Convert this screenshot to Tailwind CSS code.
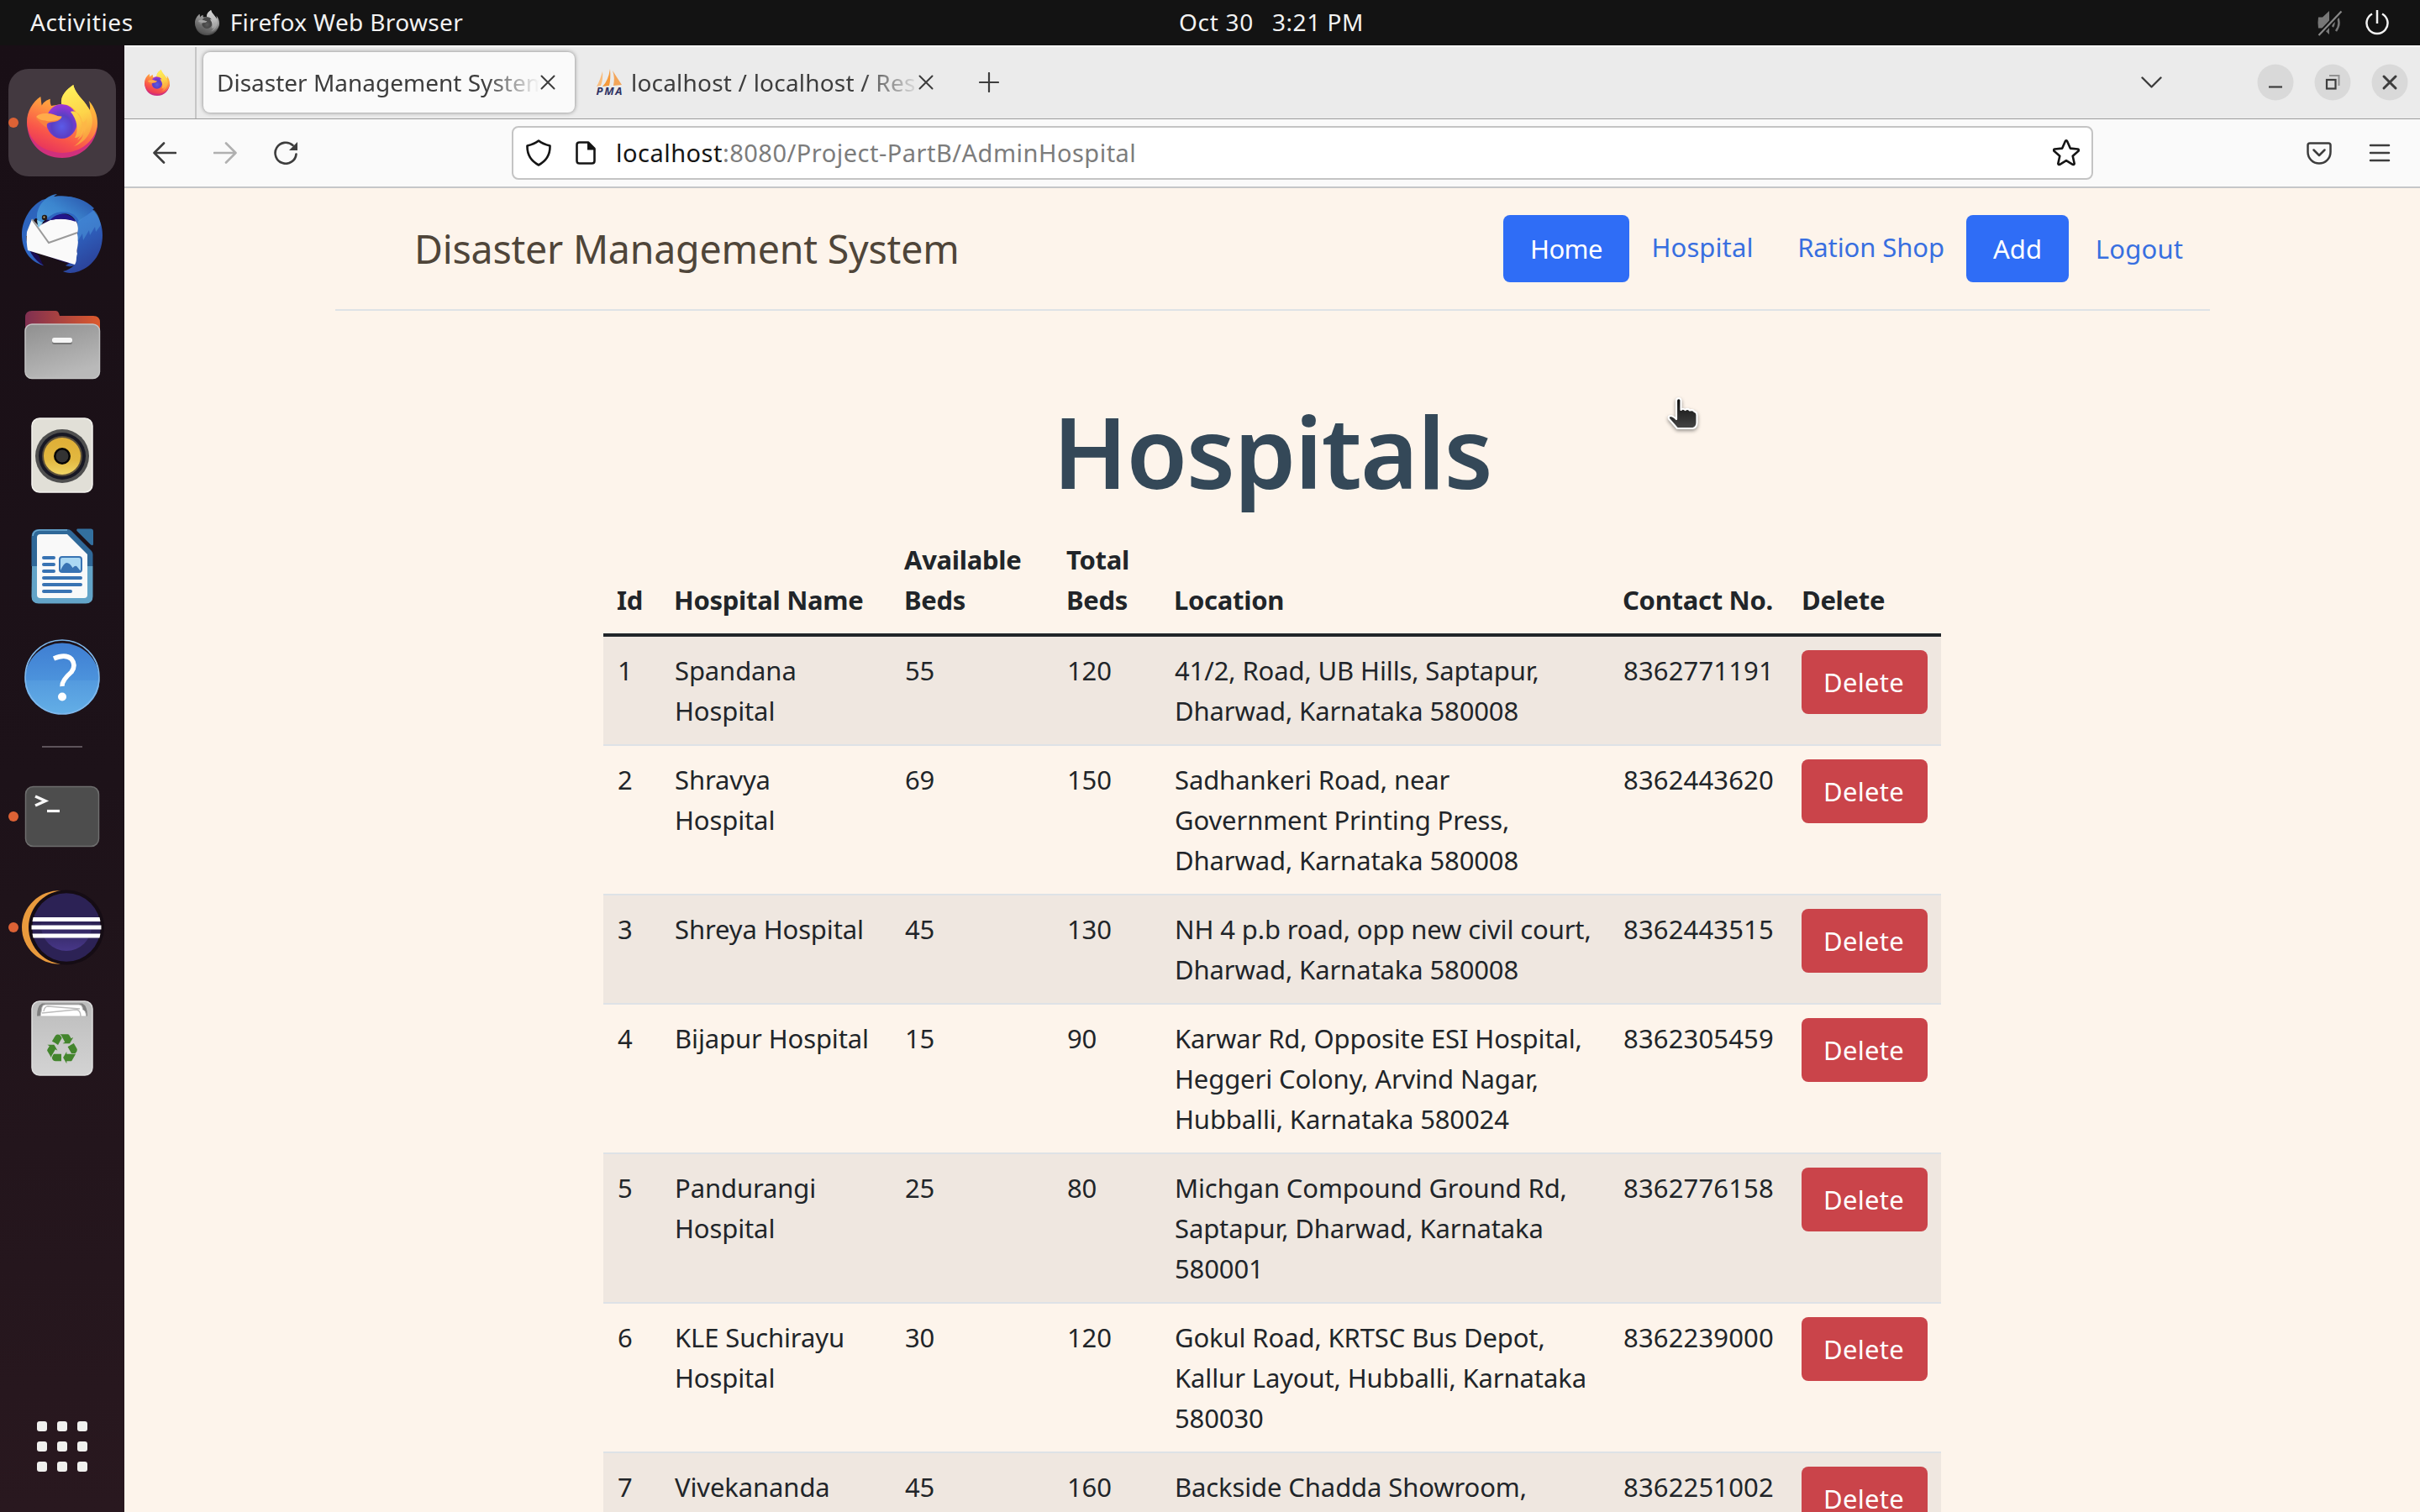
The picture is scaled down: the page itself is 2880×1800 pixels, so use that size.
<!DOCTYPE html>
<html lang="en">
<head>
<meta charset="utf-8">
<title>Disaster Management System</title>
<script src="https://cdn.jsdelivr.net/npm/@tailwindcss/browser@4"></script>
</head>
<body class="flex h-[1800px] w-[2880px] flex-col overflow-hidden bg-[#131313] font-['Noto_Sans',sans-serif]">

<!-- shared gradients and symbols -->
<svg class="absolute size-0" aria-hidden="true">
  <defs>
    <linearGradient id="ffBody" x1="0.75" y1="0.1" x2="0.35" y2="1"><stop offset="0" stop-color="#ffcf3a"/><stop offset="0.4" stop-color="#ff9640"/><stop offset="0.75" stop-color="#f9554a"/><stop offset="1" stop-color="#e8355c"/></linearGradient>
    <linearGradient id="ffFlame" x1="0.4" y1="0" x2="0.6" y2="1"><stop offset="0" stop-color="#fff05a"/><stop offset="0.5" stop-color="#fdd44a"/><stop offset="1" stop-color="#f9953f"/></linearGradient>
    <radialGradient id="ffGlobe" cx="0.5" cy="0.65" r="0.65"><stop offset="0" stop-color="#5b5be8"/><stop offset="0.5" stop-color="#5a3fc4"/><stop offset="1" stop-color="#a035d8"/></radialGradient>
    <symbol id="firefox" viewBox="0 0 84 87">
      <path fill="#d0307c" d="M0 44C0 70 18 87 42 87S84 68 84 46L70 60Z"/>
      <path fill="url(#ffBody)" d="M16.300 14C17 18 17 21 17.700 24.500C20 20 24 18 27.700 16.700C27.500 20 28 23 29 25L41 23C40 12 47 6 55.300 0C57 8 63 14 68 20C71 24 73 27 75 30C75.500 26 75 23 73.700 19C81 27 84 37 84 46C83 66 64 81 42 81C18 80 1 66 0 44C0 32 7 20 16.300 14Z"/>
      <ellipse cx="41.500" cy="43.500" rx="18.500" ry="20.500" fill="url(#ffGlobe)"/>
      <path fill="url(#ffFlame)" d="M41 23C40 12 47 6 55.300 0C57 8 63 14 68 20C76 30 80 40 77 50C74 62 66 70 56 73C64 68 68 60 68 54C64 62 60 63 57 63C62 54 60 42 52 32C55 31 57 32 59 33C55 26 48 23 41 23Z"/>
      <path fill="#fdb647" opacity=".75" d="M59 33C67 42 68 54 60 66C68 61 73 51 71 40C69 45 66 47 65 41C64 37 62 34 59 33Z"/>
      <path fill="#f8803f" d="M11 40C15 35 20 34 27 34C31 34 37 38 41.500 38C40 43 34 44 29 44.500C25 45 23 46 23.500 51C19 48 14 43 11 40Z"/>
      <path fill="#ffab4a" d="M11 38C15 34 20 33.500 27 34.500C32 35.500 37 38 41.500 37.500C40 42 34 42.500 29 43C25 43.500 23 43 22 42.500C18 42.500 14 41 11 38Z"/>
    </symbol>
    <symbol id="close" viewBox="0 0 18 18"><path d="M1.500 1.500l15 15M16.500 1.500l-15 15" fill="none" stroke="currentColor" stroke-width="2" stroke-linecap="round"/></symbol>
    <linearGradient id="folderBack" x1="0" x2="1"><stop offset="0" stop-color="#7f2f51"/><stop offset="1" stop-color="#dd5a2c"/></linearGradient>
    <linearGradient id="folderFront" x1="0" y1="0" x2="0.4" y2="1"><stop offset="0" stop-color="#8f8f8f"/><stop offset="1" stop-color="#b9b9b9"/></linearGradient>
    <linearGradient id="tbBody" x1="0.2" y1="0" x2="0.8" y2="1"><stop offset="0" stop-color="#2c62b8"/><stop offset="0.5" stop-color="#2f68c6"/><stop offset="1" stop-color="#2b3f96"/></linearGradient>
    <linearGradient id="tbHead" x1="0" y1="1" x2="1" y2="0.2"><stop offset="0" stop-color="#4a9adb"/><stop offset="0.5" stop-color="#3c86cf"/><stop offset="1" stop-color="#2a57ad"/></linearGradient>
    <linearGradient id="gold" x1="0" y1="0" x2="0" y2="1"><stop offset="0" stop-color="#dfae36"/><stop offset="0.6" stop-color="#e2b840"/><stop offset="1" stop-color="#f0d566"/></linearGradient>
    <linearGradient id="helpTop" x1="0" y1="0" x2="0" y2="1"><stop offset="0" stop-color="#3f7ed2"/><stop offset="1" stop-color="#4c93dc"/></linearGradient>
    <linearGradient id="helpBottom" x1="0" y1="0" x2="0" y2="1"><stop offset="0" stop-color="#549ade"/><stop offset="1" stop-color="#63aee6"/></linearGradient>
    <linearGradient id="eclipseGlow" x1="0" y1="0" x2="0" y2="1"><stop offset="0.4" stop-color="#2c2255"/><stop offset="1" stop-color="#473788"/></linearGradient>
    <linearGradient id="trash" x1="0" y1="0" x2="0" y2="1"><stop offset="0" stop-color="#bcbcbc"/><stop offset="1" stop-color="#d3d3d3"/></linearGradient>
    <linearGradient id="hand" x1="0" y1="0" x2="0" y2="1"><stop offset="0" stop-color="#0c0c0c"/><stop offset="1" stop-color="#454545"/></linearGradient>
  </defs>
</svg>

<!-- system bar -->
<header class="flex h-[54px] shrink-0 items-center text-[28px] leading-[52px] text-[#f2f2f2]">
  <div class="flex w-[1403px] items-center">
    <span class="-mt-0.5 ml-9 tracking-[0.6px]">Activities</span>
    <svg class="ml-[73px] h-[30px] w-[29px] grayscale brightness-90" viewBox="0 0 84 87"><use href="#firefox"/></svg>
    <span class="-mt-0.5 ml-[13px] tracking-[0.35px]">Firefox Web Browser</span>
  </div>
  <div class="-mt-0.5 flex gap-[22px]"><span class="tracking-[0.71px]">Oct 30</span><span class="tracking-[0.55px]">3:21 PM</span></div>
  <div class="flex flex-1 items-center justify-end gap-[27px] pr-[37px]">
    <svg class="h-[32px] w-[30px]" viewBox="0 0 30 32" fill="none">
      <path fill="#777" d="M1 9.500h5L14 2v28L6 22.500H1Q0 16 1 9.500Z"/>
      <path d="M18 11q3 5 0 10M22 6.500q7 9.500 0 19.500" stroke="#777" stroke-width="2.500"/>
      <path d="M1.500 31L28.500 2.500" stroke="#131313" stroke-width="6"/>
      <path d="M1.500 31L28.500 2.500" stroke="#888" stroke-width="2.200"/>
    </svg>
    <svg class="h-[32px] w-[28px]" viewBox="0 0 28 32" fill="none" stroke="#f2f2f2" stroke-width="2.500"><path d="M8 5.500a12.500 12.500 0 1 0 12 0M14 1v16"/></svg>
  </div>
</header>

<div class="flex min-h-0 flex-1">
  <!-- dock -->
  <nav class="flex w-[148px] shrink-0 flex-col bg-gradient-to-b from-[#190f16] via-[#1d1219] to-[#29181f] pt-[26px] pb-3">
    <svg class="h-[132px] w-[148px]" viewBox="0 0 148 132">
      <rect x="10" y="2" width="128" height="128" rx="24" fill="#433940"/>
      <circle cx="16" cy="66" r="6" fill="#dc6235"/>
      <use href="#firefox" x="32" y="21" width="84" height="87"/>
    </svg>
    <svg class="h-[132px] w-[148px]" viewBox="0 0 148 132">
      <path fill="#1b0c52" d="M31 84L90 105L96 80L92 50L60 46L32 70Z"/>
      <path fill="#1b0c52" d="M32 83Q38 98 52 105L46 92Z"/>
      <path fill="url(#tbBody)" d="M66 22C98 18 122 40 122 68C122 88 112 104 94 111C86 114 78 113 75 111C80 110 85 107 88 104C84 106 80 105 78 104C88 99 90 92 92 86C92 78 90 86 92 66C94 56 92 52 90 51C82 38 70 42 60 50L42 48C34 58 32 66 35 68L31 69C32 84 40 98 52 104C36 100 26 86 26 67C26 50 36 34 50 26Z"/>
      <path fill="#fafafa" d="M38 49L32 64Q31 76 33 86L89 103C92 98 90 96 92 90C90 86 95 78 92 66C94 60 93 55 90 51Q74 47 60 50L46 57Z"/>
      <path fill="none" stroke="#9a9a9a" stroke-width="2" d="M38 49L58 77L92 65"/>
      <path fill="#21168a" d="M60 50C68 40 84 40 90 52Q76 46 60 50Z"/>
      <path fill="url(#tbHead)" d="M68 19C56 20 44 32 44 46L45 58C52 52 58 44 68 41C82 38 92 44 94 52L112 36C100 24 84 20 64 22Z"/>
      <path fill="#4c96d8" d="M92 52L112 38Q118 44 120 56L114 64L113 58L107 68L106 62L99 74L98 66L92 76L93 66Z" opacity=".55"/>
      <path fill="#8fd0ee" d="M44 50L46 59L51 53Z"/>
      <circle cx="53" cy="47" r="3.200" fill="#241c18"/><circle cx="52.500" cy="46.500" r="1" fill="#d9c98a"/>
    </svg>
    <svg class="h-[132px] w-[148px]" viewBox="0 0 148 132">
      <path fill="url(#folderBack)" d="M30 34q0-8 8-8h28q3 0 4 3l1 3h40q8 0 8 8v20H30Z"/>
      <rect x="30" y="42" width="88.500" height="64.500" rx="8" fill="url(#folderFront)" stroke="#c4c4c4" stroke-width="1.500"/>
      <rect x="62" y="60" width="24" height="6" rx="2.500" fill="#777"/>
      <rect x="62" y="58" width="24" height="6" rx="2.500" fill="#f5f5f5"/>
    </svg>
    <svg class="h-[132px] w-[148px]" viewBox="0 0 148 132">
      <rect x="38" y="22" width="72" height="88" rx="9" fill="#e1dfd7" stroke="#f3f2ee" stroke-width="1.500"/>
      <circle cx="74" cy="67" r="32" fill="#4f4f4f"/><circle cx="74" cy="67" r="28" fill="#181824"/>
      <circle cx="74" cy="67" r="24" fill="#5c503a"/><circle cx="74" cy="67" r="22" fill="url(#gold)"/>
      <circle cx="74" cy="67" r="10" fill="#050505"/><circle cx="74" cy="67" r="7.500" fill="#333"/>
    </svg>
    <svg class="h-[132px] w-[148px]" viewBox="0 0 148 132">
      <path fill="#63a4c8" d="M38 66h72.500v36q0 8.500-8.500 8.500H46q-8.500 0-8.500-8.500Z"/>
      <path fill="#2f6898" d="M37.500 66V31q0-9 9-9H80q3 0 5 2l24 24q1.500 2 1.500 4v14Z"/>
      <path fill="none" stroke="#6ea9cf" stroke-width="1.500" d="M39 30q1-7 8-7h33"/>
      <path fill="#33709f" d="M92 21.500h16q3 0 3 3v15q0 3-3 1L91.500 24q-1-1.500.5-2.500Z"/>
      <path fill="#f9f9f9" d="M44 32q0-4 4-4h32l24 24v48q0 4-4 4H48q-4 0-4-4Z"/>
      <g stroke="#3873b3" stroke-width="4" stroke-linecap="round"><path d="M52 56h12M52 64h12M52 72h12M52 80h44M52 88h44M52 96h32"/></g>
      <rect x="71" y="55" width="26" height="18" rx="3" fill="#abd8f3" stroke="#3873b3" stroke-width="2"/>
      <path fill="#3873b3" d="M72 71q4-9 7.500-9t7 6q3.500-4 5.500-1l4 5v1H72Z"/>
    </svg>
    <svg class="h-[132px] w-[148px]" viewBox="0 0 148 132">
      <path fill="url(#helpTop)" d="M29.500 70a44.500 44.500 0 1 1 89 0Z"/>
      <path fill="url(#helpBottom)" d="M29.500 70a44.500 40 0 0 0 89 0Z"/>
      <circle cx="74" cy="66" r="44" fill="none" stroke="#7fb8ec" stroke-width="1.500"/>
      <path d="M64 44Q78 38 85 44.500Q91 52 85 60Q73.500 70 74 77" fill="none" stroke="#fff" stroke-width="5.500"/>
      <circle cx="74" cy="89.500" r="5" fill="#fff"/>
    </svg>
    <div class="flex h-[34px] items-center justify-center"><div class="h-0.5 w-12 bg-[#5d535a]"></div></div>
    <svg class="h-[132px] w-[148px]" viewBox="0 0 148 132">
      <circle cx="16" cy="66" r="6" fill="#dc6235"/>
      <rect x="30.500" y="30.500" width="87" height="71" rx="9" fill="#4d4d4d" stroke="#6e6e6e" stroke-width="1.500"/>
      <path d="M42 42l12 5.500-12 5.500" fill="none" stroke="#f8f8f8" stroke-width="3.500"/>
      <path d="M56 59.500h15" stroke="#f8f8f8" stroke-width="3.200"/>
    </svg>
    <svg class="h-[132px] w-[148px]" viewBox="0 0 148 132">
      <circle cx="16" cy="66" r="6" fill="#dc6235"/>
      <path fill="#e99a3d" d="M72 22A46 44 0 0 0 72 110Z"/>
      <ellipse cx="79" cy="66" rx="45" ry="44.500" fill="#150c14"/>
      <circle cx="79" cy="66" r="40.800" fill="#2c2255"/>
      <circle cx="79" cy="64" r="30" fill="url(#eclipseGlow)"/>
      <path fill="#fff" d="M39.500 54h79l1 5h-81ZM37.500 63.500h83v5h-83ZM38.500 73.500h81l-1 5h-79Z"/>
    </svg>
    <svg class="h-[132px] w-[148px]" viewBox="0 0 148 132">
      <rect x="38" y="22" width="72" height="88" rx="9" fill="url(#trash)" stroke="#dedede" stroke-width="1.500"/>
      <path fill="#808080" d="M50 24.500h48q6 3 6 15H44q0-12 6-15Z"/>
      <path fill="#fff" stroke="#bcbcbc" d="M48 40l2-11q1-3 4-3h40q3 0 4 3l.5 3q4 1 4 8Z"/>
      <path fill="none" stroke="#bcbcbc" stroke-width="1.500" d="M52 34q1-6 5-6l38 3M50 36l40-4q6 0 6 8"/>
      <text x="74" y="96" text-anchor="middle" class="fill-[#43852d] font-['DejaVu_Sans'] text-[49px]">♻</text>
    </svg>
    <svg class="mt-auto h-[132px] w-[148px]" viewBox="0 0 148 132" fill="#f0f0ee">
      <rect x="44" y="36" width="12" height="12" rx="3"/><rect x="68" y="36" width="12" height="12" rx="3"/><rect x="92" y="36" width="12" height="12" rx="3"/>
      <rect x="44" y="60" width="12" height="12" rx="3"/><rect x="68" y="60" width="12" height="12" rx="3"/><rect x="92" y="60" width="12" height="12" rx="3"/>
      <rect x="44" y="84" width="12" height="12" rx="3"/><rect x="68" y="84" width="12" height="12" rx="3"/><rect x="92" y="84" width="12" height="12" rx="3"/>
    </svg>
  </nav>

  <!-- browser window -->
  <div class="flex min-w-0 flex-1 flex-col">
    <div class="flex h-[88px] shrink-0 items-center border-t-2 border-b border-t-white border-b-[#9c9c9c] bg-[#ebebeb] pb-px text-[28px] text-[#3d3d3d]">
      <div class="-mb-px flex h-[85px] w-[86px] items-center justify-center border-r-2 border-[#c6c6c6] pr-1.5 pb-px">
        <svg class="h-[31px] w-[30px]" viewBox="0 0 84 87"><use href="#firefox"/></svg>
      </div>
      <div class="ml-2 flex h-[72px] w-[442px] items-center rounded-lg bg-[#fafafa] pl-4 shadow-[0_0_5px_rgba(0,0,0,0.45)]">
        <span class="-mt-px w-[385px] overflow-hidden whitespace-nowrap [mask-image:linear-gradient(to_right,black_320px,transparent_384px)]">Disaster Management System</span>
        <svg class="size-[18px] text-[#3d3d3d]"><use href="#close"/></svg>
      </div>
      <svg class="ml-[25px] h-8 w-8" viewBox="0 0 32 32">
        <path fill="#f8bd7f" d="M8 3Q9 12 6 20L1 21Q5 14 8 3Z"/>
        <path fill="#f59a3c" d="M17 0Q18 12 16 20L8 21Q15 14 17 0Z"/>
        <path fill="#f3a55a" d="M20 2Q25 10 31 19L21 20Q23 10 20 2Z"/>
        <text x="16" y="31" text-anchor="middle" textLength="31" class="fill-[#2f3263] font-['Noto_Sans'] text-[13px] font-bold italic">PMA</text>
      </svg>
      <span class="-mt-px ml-[10px] w-[338px] overflow-hidden whitespace-nowrap tracking-[0.2px] [mask-image:linear-gradient(to_right,black_275px,transparent_345px)]">localhost / localhost / Resource</span>
      <svg class="ml-1 size-[18px]"><use href="#close"/></svg>
      <svg class="ml-[54px] size-6" viewBox="0 0 24 24" stroke="#3d3d3d" stroke-width="2.200" stroke-linecap="round"><path d="M12 1v22M1 12h22"/></svg>
      <svg class="ml-auto h-3.5 w-[25px]" viewBox="0 0 25 14" fill="none" stroke="#3d3d3d" stroke-width="2.400" stroke-linecap="round" stroke-linejoin="round"><path d="M1.500 1.500l11 11 11-11"/></svg>
      <div class="mr-[14px] ml-[113px] flex gap-6">
        <svg class="size-11" viewBox="0 0 44 44"><circle cx="22" cy="22" r="21.500" fill="#d9d9d9"/><path d="M14 27.500h16" stroke="#3d3d3d" stroke-width="2.200"/></svg>
        <svg class="size-11" viewBox="0 0 44 44" fill="none"><circle cx="22" cy="22" r="21.500" fill="#d9d9d9"/><path d="M18 14h11.500v12" stroke="#929292" stroke-width="2"/><rect x="15" y="19" width="10.500" height="10.500" stroke="#3d3d3d" stroke-width="2.200"/></svg>
        <svg class="size-11" viewBox="0 0 44 44"><circle cx="22" cy="22" r="21.500" fill="#d9d9d9"/><path d="M15 15l14 14M29 15l-14 14" stroke="#3d3d3d" stroke-width="3" stroke-linecap="round"/></svg>
      </div>
    </div>

    <div class="flex h-[82px] shrink-0 items-center border-b-2 border-[#c5c6c9] bg-[#fafafa] pl-[34px]">
      <svg class="h-7 w-7" viewBox="0 0 28 28" fill="none" stroke="#3d3d3d" stroke-width="2.600" stroke-linecap="round" stroke-linejoin="round"><path d="M27 14H1.500M13 2.500L1.500 14 13 25.500"/></svg>
      <svg class="ml-11 h-7 w-7" viewBox="0 0 28 28" fill="none" stroke="#b0b0b0" stroke-width="2.600" stroke-linecap="round" stroke-linejoin="round"><path d="M1 14h25.500M15 2.500L26.500 14 15 25.500"/></svg>
      <svg class="ml-11 h-7 w-7" viewBox="0 0 28 28" fill="none" stroke="#3d3d3d" stroke-width="2.600" stroke-linecap="round"><path d="M26.500 15.500A12.500 12.500 0 1 1 22.500 5"/><path fill="#3d3d3d" stroke="none" d="M28 1v10H18Z"/></svg>
      <div class="ml-[255px] flex h-16 w-[1882px] items-center rounded-lg border-2 border-[#c4c4c4] bg-white pr-3.5 pl-[15px]">
        <svg class="h-8 w-[30px]" viewBox="0 0 30 32" fill="none" stroke="#151515" stroke-width="2.600" stroke-linejoin="round"><path d="M15 1.500Q20 5.500 28.500 7.500Q29 23 15 30.500Q1 23 1.500 7.500Q10 5.500 15 1.500Z"/></svg>
        <svg class="ml-[29px] h-7 w-6" viewBox="0 0 24 28" fill="none" stroke="#151515" stroke-width="2.600" stroke-linejoin="round"><path d="M4.500 1.500H15L22.500 9v14.500q0 3-3 3h-15q-3 0-3-3v-19q0-3 3-3Z"/><path fill="#151515" stroke="none" d="M14 1l9.500 9.500H14Z"/></svg>
        <span class="ml-6 text-[29px] tracking-[0.49px] text-[#7c7c7c]"><span class="text-[#151515]">localhost</span>:8080/Project-PartB/AdminHospital</span>
        <svg class="ml-auto size-8" viewBox="0 0 32 32" fill="none" stroke="#151515" stroke-width="2.600" stroke-linejoin="round"><path d="M14.800 2.200q1.200-1.600 2.400 0l3.600 8.400 9 .9q1.800.6.700 2.200l-6.800 6 2 9q-.3 1.700-2 1.100L16 25.100l-7.700 4.700q-1.700.6-2-1.100l2-9-6.800-6q-1.100-1.600.7-2.200l9-.9Z"/></svg>
      </div>
      <svg class="ml-[254px] h-[27px] w-[30px]" viewBox="0 0 30 27" fill="none" stroke="#3d3d3d" stroke-width="2.500" stroke-linecap="round" stroke-linejoin="round"><path d="M4 1.500h22q2.500 0 2.500 2.500v8a13.500 13.500 0 0 1-27 0V4q0-2.500 2.500-2.500ZM8.500 9.500l6.500 6.500 6.500-6.500"/></svg>
      <svg class="ml-[44px] h-[22px] w-[26px]" viewBox="0 0 26 22" stroke="#3d3d3d" stroke-width="2.500" stroke-linecap="round"><path d="M2 2h22M2 11h22M2 20h22"/></svg>
    </div>

    <!-- page -->
    <main class="relative min-h-0 flex-1 overflow-hidden bg-[#fdf4eb] text-[#212529]">
      <div class="ml-[251px] flex h-[146px] w-[2231px] items-center border-b-2 border-[#dee2e6] pl-[94px]">
        <h2 class="mt-0.5 text-[46.5px] tracking-[-0.22px] text-[#4f4539]">Disaster Management System</h2>
        <div class="ml-auto flex items-center text-center text-[31px] leading-[48px] text-[#386fe0]">
          <a class="w-[150px] rounded-lg bg-[#2f6df6] py-4 tracking-[-0.6px] text-white">Home</a>
          <a class="mb-1 w-[174px] tracking-[0.1px]">Hospital</a>
          <a class="mb-1 w-[227px] tracking-[-0.1px]">Ration Shop</a>
          <a class="w-[122px] rounded-lg bg-[#2f6df6] py-4 text-white">Add</a>
          <a class="w-[168px] tracking-[0.2px]">Logout</a>
        </div>
      </div>

      <h1 class="mt-[95px] mb-[17px] ml-[570px] w-[1592px] text-center text-[118px] leading-[144px] font-semibold tracking-[-1.5px] text-[#344858]">Hospitals</h1>

      <table class="ml-[570px] w-[1592px] table-fixed border-separate border-spacing-0 text-left text-[31px] leading-[48px] tracking-[-0.12px] whitespace-nowrap [&_td]:border-b-2 [&_td]:border-[#dee2e6] [&_td]:py-4 [&_td]:pl-[17px] [&_td]:align-top [&_td:last-child]:pl-4 [&_th]:border-b-4 [&_th]:border-[#212529] [&_th]:p-4 [&_th]:align-bottom [&_th]:tracking-[-0.3px] [&_tbody_tr:nth-child(odd)]:bg-[#efe7e0] [&_button]:block [&_button]:h-[76px] [&_button]:w-[150px] [&_button]:rounded-lg [&_button]:bg-[#ca444a] [&_button]:pr-0.5 [&_button]:tracking-[0.3px] [&_button]:text-white">
        <colgroup><col class="w-[68px]"><col class="w-[274px]"><col class="w-[193px]"><col class="w-[128px]"><col class="w-[534px]"><col class="w-[213px]"><col class="w-[182px]"></colgroup>
        <thead>
          <tr><th>Id</th><th>Hospital Name</th><th>Available<br>Beds</th><th>Total<br>Beds</th><th>Location</th><th>Contact No.</th><th>Delete</th></tr>
        </thead>
        <tbody>
          <tr><td>1</td><td>Spandana<br>Hospital</td><td>55</td><td>120</td><td>41/2, Road, UB Hills, Saptapur,<br>Dharwad, Karnataka 580008</td><td class="tracking-[0.15px]">8362771191</td><td><button>Delete</button></td></tr>
          <tr><td>2</td><td>Shravya<br>Hospital</td><td>69</td><td>150</td><td>Sadhankeri Road, near<br>Government Printing Press,<br>Dharwad, Karnataka 580008</td><td class="tracking-[0.15px]">8362443620</td><td><button>Delete</button></td></tr>
          <tr><td>3</td><td>Shreya Hospital</td><td>45</td><td>130</td><td>NH 4 p.b road, opp new civil court,<br>Dharwad, Karnataka 580008</td><td class="tracking-[0.15px]">8362443515</td><td><button>Delete</button></td></tr>
          <tr><td>4</td><td>Bijapur Hospital</td><td>15</td><td>90</td><td>Karwar Rd, Opposite ESI Hospital,<br>Heggeri Colony, Arvind Nagar,<br>Hubballi, Karnataka 580024</td><td class="tracking-[0.15px]">8362305459</td><td><button>Delete</button></td></tr>
          <tr><td>5</td><td>Pandurangi<br>Hospital</td><td>25</td><td>80</td><td>Michgan Compound Ground Rd,<br>Saptapur, Dharwad, Karnataka<br>580001</td><td class="tracking-[0.15px]">8362776158</td><td><button>Delete</button></td></tr>
          <tr><td>6</td><td>KLE Suchirayu<br>Hospital</td><td>30</td><td>120</td><td>Gokul Road, KRTSC Bus Depot,<br>Kallur Layout, Hubballi, Karnataka<br>580030</td><td class="tracking-[0.15px]">8362239000</td><td><button>Delete</button></td></tr>
          <tr><td>7</td><td>Vivekananda<br>Hospital</td><td>45</td><td>160</td><td>Backside Chadda Showroom,<br>Hubballi, Karnataka 580029</td><td class="tracking-[0.15px]">8362251002</td><td><button>Delete</button></td></tr>
        </tbody>
      </table>

      <!-- pointer -->
      <svg class="absolute top-[249px] left-[1836px] h-[40px] w-[38px] drop-shadow-[0_2px_2px_rgba(0,0,0,0.4)]" viewBox="0 0 38 40">
        <path fill="url(#hand)" stroke="#fff" stroke-width="2.200" stroke-linejoin="round" d="M11 26V4q0-2.800 2.800-2.800T16.500 4v11q2-2.500 5 0q3-2.500 5.500.5q4-1 5.500 1.500q3 .5 3 4v9q0 6-5 7H12L2 25.500q-1-3 2-3.500q3 0 7 4Z"/>
      </svg>
    </main>
  </div>
</div>
</body>
</html>
